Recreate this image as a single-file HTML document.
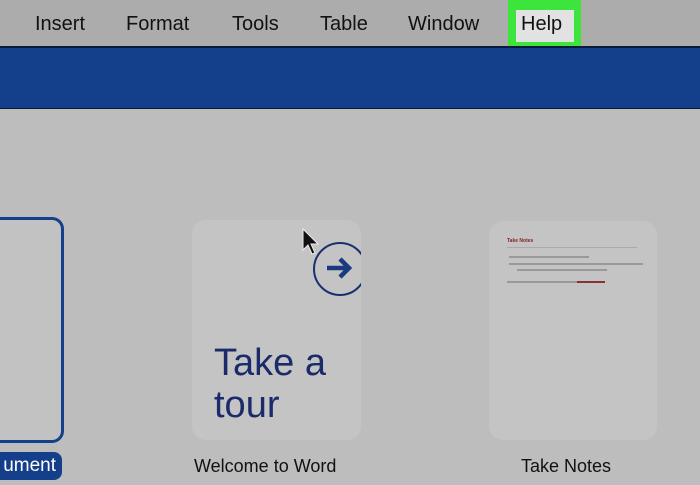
<html><head><style>
body{margin:0;width:700px;height:485px;overflow:hidden;background:#bdbdbd;font-family:"Liberation Sans",sans-serif;position:relative}
.menu{position:absolute;top:0;left:0;width:700px;height:46px;background:#acacac}
.menu span{position:absolute;top:13px;font-size:20px;color:#111}
.band{position:absolute;top:46px;left:0;width:700px;height:63px;background:#143f8a;border-top:2px solid #0a1a3a;border-bottom:1px solid #0a1a3a;box-sizing:border-box}
.card{position:absolute;border-radius:14px;background:#c4c4c4}
</style></head><body>
<div class="menu">
<span style="left:35px">Insert</span>
<span style="left:126px">Format</span>
<span style="left:232px">Tools</span>
<span style="left:320px">Table</span>
<span style="left:408px">Window</span>
</div>
<div style="position:absolute;left:508px;top:0;width:73px;height:52px;background:#3ce43c"></div>
<div style="position:absolute;left:516px;top:10px;width:58px;height:32px;background:#e2e2e2"></div>
<span style="position:absolute;left:521px;top:13px;font-size:20px;color:#111">Help</span>
<div class="band"></div>
<div style="position:absolute;left:-20px;top:217px;width:78px;height:220px;border:3px solid #143f8a;border-radius:12px;background:#c2c2c2"></div>
<div style="position:absolute;left:-10px;top:452px;width:72px;height:28px;background:#143f8a;border-radius:8px;color:#fff;font-size:19px;line-height:28px;text-align:right;padding-right:6px;box-sizing:border-box">ument</div>
<div class="card" style="left:192px;top:220px;width:169px;height:220px;overflow:hidden">
<div style="position:absolute;left:121px;top:22px;width:50px;height:50px;border:2px solid #1a2f6e;border-radius:50%"></div>
<svg style="position:absolute;left:133px;top:35px" width="30" height="26" viewBox="0 0 30 26"><path d="M2 13H24M15 4L24 13L15 22" stroke="#1a3a80" stroke-width="4.5" fill="none"/></svg>
<div style="position:absolute;left:22px;top:122px;font-size:38px;line-height:42px;color:#1a2a6a">Take a<br>tour</div>
</div>
<svg style="position:absolute;left:302px;top:228px" width="18" height="28" viewBox="0 0 18 28"><path d="M1 1V22L6 17L10 26L13 25L9 16H16Z" fill="#111" stroke="#eee" stroke-width="1"/></svg>
<div style="position:absolute;left:194px;top:456px;font-size:18px;color:#111">Welcome to Word</div>
<div class="card" style="left:489px;top:221px;width:168px;height:219px">
<div style="position:absolute;left:18px;top:17px;font-size:5px;color:#822;font-weight:bold">Take Notes</div>
<div style="position:absolute;left:18px;top:26px;width:130px;height:1px;background:#aaa"></div>
<div style="position:absolute;left:20px;top:35px;width:80px;height:2px;background:#999"></div>
<div style="position:absolute;left:20px;top:42px;width:134px;height:2px;background:#999"></div>
<div style="position:absolute;left:28px;top:48px;width:90px;height:2px;background:#999"></div>
<div style="position:absolute;left:18px;top:60px;width:70px;height:2px;background:#999"></div>
<div style="position:absolute;left:88px;top:60px;width:28px;height:2px;background:#833"></div>
</div>
<div style="position:absolute;left:521px;top:456px;font-size:18px;color:#111">Take Notes</div>
</body></html>
